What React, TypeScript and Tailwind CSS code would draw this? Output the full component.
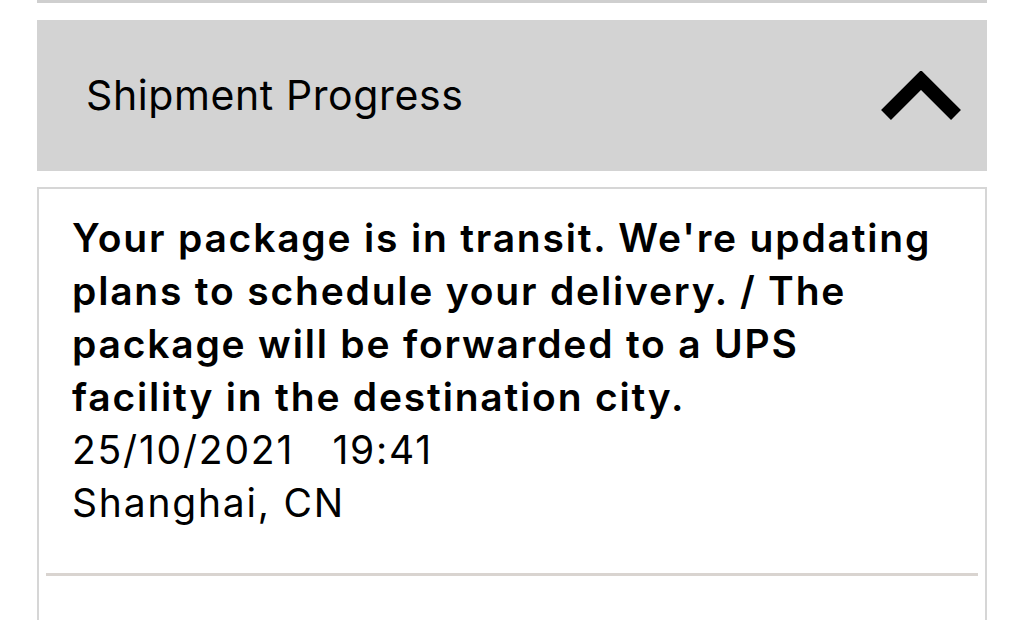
export default function App() {
  return (
    <div className="h-[620px] w-[1024px] overflow-hidden bg-white font-['Inter',sans-serif] text-black">
      {/* Previous card edge */}
      <div className="mx-[37px] -mt-[20px] h-[23px] border-x-2 border-b-[3px] border-[#cfcfcf] bg-white" />

      {/* Accordion header */}
      <div className="mx-[37px] mt-[17px] flex h-[151px] items-center justify-between bg-[#d3d3d3] pl-[49px] pr-[26px]">
        <span className="text-[41px] leading-none tracking-[0.6px]">Shipment Progress</span>
        <svg width="80" height="52" viewBox="0 0 80 52" className="mt-[2px]">
          <path d="M5 44 L40 9 L75 44" fill="none" stroke="black" strokeWidth="14" strokeLinejoin="miter" />
        </svg>
      </div>

      {/* Progress entry */}
      <div className="mx-[37px] mt-[16px] h-[460px] border-x-2 border-t-2 border-[#d6d6d6] px-[7px]">
        <div className="px-[26px] pt-[22px] pb-[44px] text-[39px] leading-[53px] tracking-[1.8px]">
          <p className="font-semibold">
            Your package is in transit. We're updating
            <br />
            plans to schedule your delivery. / The
            <br />
            package will be forwarded to a UPS
            <br />
            facility in the destination city.
          </p>
          <p>25/10/2021&nbsp;&nbsp;&nbsp;19:41</p>
          <p>Shanghai, CN</p>
        </div>
        <div className="h-[3px] bg-[#d9d4d0]" />
      </div>
    </div>
  );
}
